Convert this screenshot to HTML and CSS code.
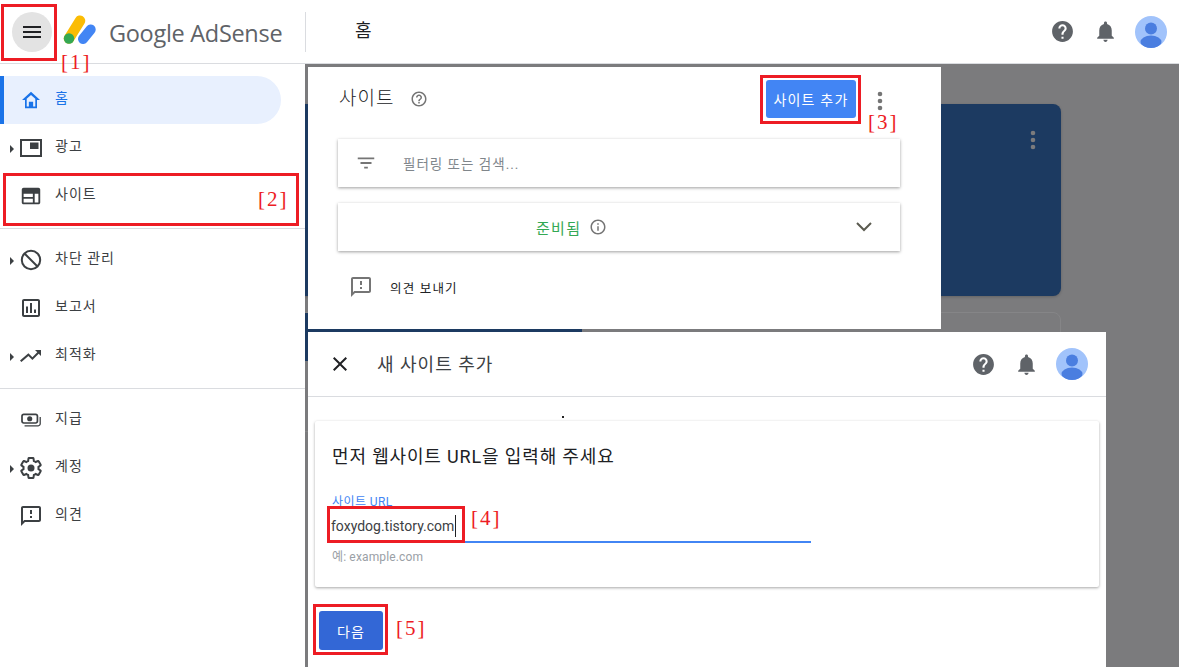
FILE: index.html
```html
<!DOCTYPE html>
<html lang="ko">
<head>
    <meta charset="UTF-8">
    <meta name="viewport" content="width=device-width, initial-scale=1.0">
    <title>Google AdSense</title>
    <link rel="stylesheet" href="styles.css">
</head>
<body>
    <!-- shared icons -->
    <svg class="sprite" aria-hidden="true">
        <symbol id="i-help" viewBox="0 0 24 24"><path d="M12 2C6.48 2 2 6.48 2 12s4.48 10 10 10 10-4.48 10-10S17.52 2 12 2zm1 17h-2v-2h2v2zm2.07-7.75l-.9.92C13.45 12.9 13 13.5 13 15h-2v-.5c0-1.1.45-2.1 1.17-2.83l1.24-1.26c.37-.36.59-.86.59-1.41 0-1.1-.9-2-2-2s-2 .9-2 2H8c0-2.21 1.79-4 4-4s4 1.79 4 4c0 .88-.36 1.68-.93 2.25z"/></symbol>
        <symbol id="i-help-line" viewBox="0 0 24 24"><path d="M11 18h2v-2h-2v2zm1-16C6.48 2 2 6.48 2 12s4.48 10 10 10 10-4.48 10-10S17.52 2 12 2zm0 18c-4.41 0-8-3.59-8-8s3.59-8 8-8 8 3.59 8 8-3.59 8-8 8zm0-14c-2.21 0-4 1.79-4 4h2c0-1.1.9-2 2-2s2 .9 2 2c0 2-3 1.75-3 5h2c0-2.25 3-2.5 3-5 0-2.21-1.79-4-4-4z"/></symbol>
        <symbol id="i-info" viewBox="0 0 24 24"><path d="M11 17h2v-6h-2v6zm1-15C6.48 2 2 6.48 2 12s4.48 10 10 10 10-4.48 10-10S17.52 2 12 2zm0 18c-4.41 0-8-3.59-8-8s3.59-8 8-8 8 3.59 8 8-3.59 8-8 8zm-1-11h2V7h-2v2z"/></symbol>
        <symbol id="i-bell" viewBox="0 0 24 24"><path d="M12 22c1.1 0 2-.9 2-2h-4c0 1.1.89 2 2 2zm6-6v-5c0-3.07-1.64-5.64-4.5-6.32V4c0-.83-.67-1.5-1.5-1.5s-1.5.67-1.5 1.5v.68C7.63 5.36 6 7.92 6 11v5l-2 2v1h16v-1l-2-2z"/></symbol>
        <symbol id="i-feedback" viewBox="0 0 24 24"><path d="M20 2H4c-1.1 0-1.99.9-1.99 2L2 22l4-4h14c1.1 0 2-.9 2-2V4c0-1.1-.9-2-2-2zm0 14H5.17L4 17.17V4h16v12zm-9-4h2v2h-2zm0-6h2v4h-2z"/></symbol>
        <symbol id="i-more" viewBox="0 0 24 24"><circle cx="12" cy="5" r="2.3"/><circle cx="12" cy="12" r="2.3"/><circle cx="12" cy="19" r="2.3"/></symbol>
        <symbol id="i-avatar" viewBox="0 0 32 32">
            <clipPath id="avatar-clip"><circle cx="16" cy="16" r="16"/></clipPath>
            <circle cx="16" cy="16" r="16" fill="#a1c3fb"/>
            <circle cx="16" cy="12.5" r="6" fill="#4a7ee0"/>
            <ellipse cx="16" cy="26" rx="10.5" ry="6.5" fill="#4a7ee0" clip-path="url(#avatar-clip)"/>
        </symbol>
    </svg>

    <div class="page">
        <header class="topbar">
            <button class="menu-btn">
                <svg width="18" height="12" viewBox="0 0 18 12"><path d="M0 0h18v2H0zM0 5h18v2H0zM0 10h18v2H0z"/></svg>
            </button>
            <svg class="logo" width="34" height="32" viewBox="0 0 34 32">
                <line x1="6" y1="24.5" x2="17" y2="6.7" stroke="#fbbc04" stroke-width="10.5" stroke-linecap="round"/>
                <line x1="20" y1="25" x2="27.7" y2="15.5" stroke="#4285f4" stroke-width="10" stroke-linecap="round"/>
                <circle cx="6" cy="24.5" r="5.2" fill="#34a853"/>
            </svg>
            <span class="brand">Google AdSense</span>
            <span class="page-title">홈</span>
            <div class="actions">
                <svg class="ic-help"><use href="#i-help"/></svg>
                <svg class="ic-bell"><use href="#i-bell"/></svg>
                <svg class="ic-avatar"><use href="#i-avatar"/></svg>
            </div>
        </header>

        <div class="layout">
            <nav class="sidebar">
                <div class="nav-group">
                    <a class="nav-item active">
                        <svg viewBox="-2 -2 28 28"><path d="M12 2.5L1.5 12H5v9.5h14V12h3.500L12 2.500zM17 19.500h-2.500V14h-5v5.500H7v-8.900l5-4.500 5 4.500v8.900z"/><path d="M10 15h4v5h-4z"/></svg>
                        <span>홈</span>
                    </a>
                    <a class="nav-item has-sub">
                        <svg viewBox="1 1 24 24"><path d="M2 4h22v18H2V4zm2 2v14h18V6H4zm8 1.500h8.500V14H12V7.500z"/></svg>
                        <span>광고</span>
                    </a>
                    <a class="nav-item">
                        <svg viewBox="0 -1 26 26"><path d="M5 3h16c1.100 0 2 .9 2 2v14c0 1.100-.9 2-2 2H5c-1.100 0-2-.9-2-2V5c0-1.100.9-2 2-2zm0 6.500v3.500h10V9.500H5zm12 0V19h4V9.500h-4zM5 15v4h10v-4H5z"/></svg>
                        <span>사이트</span>
                    </a>
                </div>
                <div class="nav-group">
                    <a class="nav-item has-sub">
                        <svg viewBox="0 0 24 24"><circle cx="12" cy="12" r="9.200" fill="none" stroke="currentColor" stroke-width="2"/><path d="M5.500 5.500l13 13" stroke="currentColor" stroke-width="2"/></svg>
                        <span>차단 관리</span>
                    </a>
                    <a class="nav-item">
                        <svg viewBox="0 0 24 24"><path d="M5 3h14c1.100 0 2 .9 2 2v14c0 1.100-.9 2-2 2H5c-1.100 0-2-.9-2-2V5c0-1.100.9-2 2-2zm0 2v14h14V5H5zm2 5.500h2V17H7v-6.500zM11 7h2v10h-2V7zm4 6.500h2V17h-2v-3.500z"/></svg>
                        <span>보고서</span>
                    </a>
                    <a class="nav-item has-sub">
                        <svg viewBox="0 0 24 24"><path d="M16 6l2.290 2.290-4.880 4.880-4-4L1 16.590 2.410 18l7-6 4 4 6.300-6.290L22 12V6z"/></svg>
                        <span>최적화</span>
                    </a>
                </div>
                <div class="nav-group">
                    <a class="nav-item">
                        <svg viewBox="-1.500 -1.500 28 28"><path d="M4 5h14c1.700 0 3 1.300 3 3v6c0 1.700-1.300 3-3 3H4c-1.700 0-3-1.300-3-3V8c0-1.700 1.300-3 3-3zm0 2c-.6 0-1 .4-1 1v6c0 .6.4 1 1 1h14c.6 0 1-.4 1-1V8c0-.6-.4-1-1-1H4zm7 1a3 3 0 1 1 0 6 3 3 0 0 1 0-6zm11.500 1h1.500v8c0 1.700-1.300 3-3 3H5v-1.500h16c.8 0 1.500-.7 1.500-1.500V9z"/></svg>
                        <span>지급</span>
                    </a>
                    <a class="nav-item has-sub">
                        <svg viewBox="0 0 24 24"><path fill="none" stroke="currentColor" stroke-width="2" d="M19.430 12.980c.04-.32.07-.64.07-.98s-.03-.66-.07-.98l2.110-1.650c.19-.15.24-.42.12-.64l-2-3.460c-.12-.22-.39-.3-.61-.22l-2.490 1c-.52-.4-1.080-.73-1.690-.98l-.38-2.650C14.460 2.180 14.250 2 14 2h-4c-.25 0-.46.18-.49.42l-.38 2.650c-.61.25-1.170.59-1.690.98l-2.490-1c-.23-.09-.49 0-.61.22l-2 3.460c-.13.22-.07.49.12.64l2.110 1.650c-.04.32-.07.65-.07.98s.03.66.07.98l-2.110 1.650c-.19.15-.24.42-.12.64l2 3.460c.12.22.39.3.61.22l2.490-1c.52.4 1.080.73 1.690.98l.38 2.650c.03.24.24.42.49.42h4c.25 0 .46-.18.49-.42l.38-2.650c.61-.25 1.170-.59 1.690-.98l2.490 1c.23.09.49 0 .61-.22l2-3.460c.12-.22.07-.49-.12-.64l-2.110-1.650z"/><circle cx="12" cy="12" r="3.500"/></svg>
                        <span>계정</span>
                    </a>
                    <a class="nav-item">
                        <svg><use href="#i-feedback"/></svg>
                        <span>의견</span>
                    </a>
                </div>
            </nav>

            <main class="stage">
                <!-- page behind the dim layer -->
                <div class="bg-card">
                    <svg class="bg-more"><use href="#i-more"/></svg>
                </div>
                <div class="bg-card-next"><div class="bg-hero"></div></div>

                <section class="panel panel-sites">
                    <div class="sites-head">
                        <h2>사이트</h2>
                        <svg class="ic-small"><use href="#i-help-line"/></svg>
                        <div class="spacer"></div>
                        <button class="btn btn-add">사이트 추가</button>
                        <svg class="ic-more"><use href="#i-more"/></svg>
                    </div>
                    <div class="row-card filter-card">
                        <svg class="ic-filter" viewBox="0 0 24 24"><path d="M10 18h4v-2h-4v2zM3 6v2h18V6H3zm3 7h12v-2H6v2z"/></svg>
                        <span>필터링 또는 검색...</span>
                    </div>
                    <div class="row-card status-card">
                        <div class="status">
                            <span>준비됨</span>
                            <svg class="ic-small"><use href="#i-info"/></svg>
                        </div>
                        <svg class="chevron" width="16" height="10" viewBox="0 0 16 10"><path d="M1 1l7 7 7-7" fill="none" stroke="#5b5b50" stroke-width="2"/></svg>
                    </div>
                    <div class="send-feedback">
                        <svg><use href="#i-feedback"/></svg>
                        <span>의견 보내기</span>
                    </div>
                </section>

                <section class="panel panel-new">
                    <div class="new-head">
                        <svg class="ic-close" viewBox="0 0 24 24"><path d="M19 6.410L17.590 5 12 10.590 6.410 5 5 6.410 10.590 12 5 17.590 6.410 19 12 13.410 17.590 19 19 17.590 13.410 12z"/></svg>
                        <h2>새 사이트 추가</h2>
                        <div class="actions">
                            <svg class="ic-help"><use href="#i-help"/></svg>
                            <svg class="ic-bell"><use href="#i-bell"/></svg>
                            <svg class="ic-avatar"><use href="#i-avatar"/></svg>
                        </div>
                    </div>
                    <div class="url-card">
                        <h3>먼저 웹사이트 URL을 입력해 주세요</h3>
                        <div class="field">
                            <label>사이트 URL</label>
                            <div class="field-input"><span class="field-value">foxydog.tistory.com</span></div>
                            <p>예: example.com</p>
                        </div>
                    </div>
                    <button class="btn btn-next">다음</button>
                    <i class="speck"></i>
                </section>
            </main>
        </div>

        <!-- red annotations on top of the screenshot -->
        <div class="mark mark-1"></div>
        <div class="mark mark-2"></div>
        <div class="mark mark-3"></div>
        <div class="mark mark-4"></div>
        <div class="mark mark-5"></div>
        <span class="tag tag-1">[1]</span>
        <span class="tag tag-2">[2]</span>
        <span class="tag tag-3">[3]</span>
        <span class="tag tag-4">[4]</span>
        <span class="tag tag-5">[5]</span>
    </div>
</body>
</html>
```

FILE: styles.css
```css
* {
    box-sizing: border-box;
}
html, body {
    margin: 0;
    height: 100%;
    overflow: hidden;
}
body {
    font-family: Roboto, "Noto Sans CJK KR", sans-serif;
    font-size: 14px;
    color: #3c4043;
    background: #fff;
}
h2, h3, p {
    margin: 0;
    font-weight: 400;
}
button {
    font-family: inherit;
    border: 0;
}
.sprite {
    position: absolute;
    width: 0;
    height: 0;
}
.page {
    position: relative;
    width: 1179px;
    height: 667px;
    display: flex;
    flex-direction: column;
}

/* top bar */
.topbar {
    flex: none;
    height: 64px;
    display: flex;
    align-items: center;
    padding: 0 12px;
    border-bottom: 1px solid #dadce0;
    background: #fff;
}
.menu-btn {
    width: 40px;
    height: 40px;
    border-radius: 50%;
    background: #e3e3e3;
    display: flex;
    align-items: center;
    justify-content: center;
    padding: 0;
    fill: #202124;
}
.logo {
    margin: -3px 0 0 11px;
}
.brand {
    margin-left: 12px;
    width: 196px;
    font-family: "Open Sans", sans-serif;
    font-size: 23.500px;
    letter-spacing: -0.3px;
    color: #5f6368;
    line-height: 40px;
    height: 40px;
    padding-top: 1px;
}
.page-title {
    height: 40px;
    line-height: 38px;
    border-left: 1px solid #dadce0;
    padding-left: 49px;
    font-size: 18px;
    color: #202124;
}
.actions {
    margin-left: auto;
    display: flex;
    align-items: center;
    fill: #5f6368;
}
.ic-help {
    width: 25px;
    height: 25px;
}
.ic-bell {
    width: 25px;
    height: 25px;
    margin-left: 18px;
}
.ic-avatar {
    width: 32px;
    height: 32px;
    margin-left: 17px;
}

/* left menu */
.layout {
    flex: 1;
    display: flex;
    min-height: 0;
}
.sidebar {
    flex: none;
    width: 305px;
    background: #fff;
    padding-top: 12px;
}
.nav-group {
    padding-bottom: 8px;
    margin-bottom: 7px;
    border-bottom: 1px solid #dadce0;
}
.nav-group:last-child {
    border-bottom: 0;
}
.nav-item {
    position: relative;
    height: 48px;
    width: 281px;
    display: flex;
    align-items: center;
    padding-left: 19px;
    fill: #3c4043;
    color: #3c4043;
}
.nav-item svg {
    width: 24px;
    height: 24px;
    flex: none;
}
.nav-item span {
    margin-left: 12px;
    line-height: 20px;
    margin-top: -4px;
    font-size: 14px;
    letter-spacing: 1px;
}
.nav-item.active {
    background: #e8f0fe;
    border-left: 4px solid #1a73e8;
    border-radius: 0 24px 24px 0;
    padding-left: 15px;
    color: #1a73e8;
    fill: #1a73e8;
}
.has-sub::before {
    content: "";
    position: absolute;
    left: 10px;
    top: 21px;
    border-left: 4px solid #3c4043;
    border-top: 4px solid transparent;
    border-bottom: 4px solid transparent;
}

/* dimmed page with the two windows on it */
.stage {
    flex: 1;
    position: relative;
    overflow: hidden;
    background: #7b7b7d;
}
.bg-card {
    position: absolute;
    left: -20px;
    top: 40px;
    width: 776px;
    height: 192px;
    background: #1c3a61;
    border-radius: 8px;
    box-shadow: 0 1px 3px rgba(0, 0, 0, .2);
}
.bg-more {
    position: absolute;
    right: 16px;
    top: 24px;
    width: 24px;
    height: 24px;
    fill: #7b7b7d;
}
.bg-card-next {
    position: absolute;
    left: -20px;
    top: 248px;
    width: 776px;
    height: 120px;
    border: 1px solid #858587;
    border-radius: 8px;
    overflow: hidden;
}
.bg-hero {
    width: 296px;
    height: 48px;
    background: #1c3a61;
}
.panel {
    position: absolute;
    background: #fff;
}
.panel-sites {
    left: 3px;
    top: 3px;
    width: 633px;
    height: 262px;
}
.panel-new {
    left: 3px;
    top: 268px;
    width: 798px;
    height: 335px;
}

/* sites window */
.sites-head {
    display: flex;
    align-items: center;
    height: 38px;
    margin-top: 13px;
    padding: 0 49px 0 31px;
}
.sites-head h2 {
    font-size: 19px;
    font-weight: 300;
    letter-spacing: 1px;
    color: #202124;
    margin-top: -6px;
}
.ic-small {
    width: 18px;
    height: 18px;
    fill: #757575;
}
.sites-head .ic-small {
    margin-left: 16px;
}
.spacer {
    flex: 1;
}
.btn {
    color: #fff;
    font-size: 14px;
    letter-spacing: 1.200px;
    border-radius: 3px;
    padding: 0;
}
.btn-add {
    width: 90px;
    height: 38px;
    background: #4285f4;
}
.ic-more {
    width: 24px;
    height: 24px;
    margin-left: 12px;
    margin-top: 3px;
    fill: #757575;
    flex: none;
}
.row-card {
    display: flex;
    align-items: center;
    width: 562px;
    height: 48px;
    margin-left: 30px;
    background: #fff;
    box-shadow: 0 1px 3px rgba(0, 0, 0, .38);
}
.filter-card {
    margin-top: 21px;
    padding-left: 17px;
    color: #80868b;
}
.ic-filter {
    width: 22px;
    height: 22px;
    fill: #757575;
}
.filter-card span {
    margin-left: 26px;
    font-size: 13.500px;
    letter-spacing: 1px;
}
.status-card {
    margin-top: 16px;
    justify-content: space-between;
    padding: 0 28px 0 198px;
}
.status {
    display: flex;
    align-items: center;
    gap: 8px;
    color: #34a853;
    font-size: 15px;
    letter-spacing: 1.300px;
}
.send-feedback {
    display: flex;
    align-items: center;
    margin: 24px 0 0 41px;
    fill: #757575;
    color: #202124;
    font-size: 12.500px;
    letter-spacing: 1.200px;
}
.send-feedback svg {
    width: 24px;
    height: 24px;
}
.send-feedback span {
    margin-left: 17px;
}

/* new site window */
.new-head {
    display: flex;
    align-items: center;
    height: 65px;
    padding: 0 18px 0 20px;
    border-bottom: 1px solid #dadce0;
    fill: #202124;
}
.ic-close {
    width: 24px;
    height: 24px;
    flex: none;
}
.new-head h2 {
    margin-left: 25px;
    font-size: 18px;
    letter-spacing: 1px;
    color: #3c4043;
    margin-top: -3px;
}
.new-head .actions {
    fill: #5f6368;
}
.speck {
    position: absolute;
    left: 254px;
    top: 84px;
    width: 2px;
    height: 2px;
    background: #222;
}
.url-card {
    height: 166px;
    margin: 24px 7px 0;
    padding: 24px 17px 0;
    background: #fff;
    border-radius: 2px;
    box-shadow: 0 1px 3px rgba(0, 0, 0, .35);
}
.url-card h3 {
    font-size: 18px;
    line-height: 24px;
    letter-spacing: .85px;
    color: #202124;
}
.field {
    margin-top: 26px;
}
.field label {
    display: block;
    font-size: 12px;
    line-height: 14px;
    letter-spacing: .4px;
    color: #4285f4;
}
.field-input {
    width: 480px;
    height: 28px;
    margin: 6px 0 0 -1px;
    border-bottom: 2px solid #4285f4;
}
.field-value {
    display: inline-block;
    font-size: 14px;
    line-height: 22px;
    color: #3c4043;
    padding-right: 1px;
    border-right: 1px solid #202124;
}
.field p {
    margin-top: 6px;
    font-size: 12px;
    line-height: 16px;
    letter-spacing: .15px;
    color: #9aa0a6;
}
.btn-next {
    display: block;
    width: 64px;
    height: 39px;
    margin: 24px 0 0 11px;
    background: #3367d6;
}

/* annotations */
.mark {
    position: absolute;
    border: 3px solid #ed1c24;
}
.mark-1 { left: 1px; top: 4px; width: 56px; height: 57px; }
.mark-2 { left: 3px; top: 173px; width: 296px; height: 53px; }
.mark-3 { left: 760px; top: 75px; width: 101px; height: 49px; }
.mark-4 { left: 327px; top: 506px; width: 138px; height: 37px; }
.mark-5 { left: 313px; top: 604px; width: 75px; height: 51px; }
.tag {
    position: absolute;
    font-family: "Liberation Serif", serif;
    font-size: 21px;
    line-height: 22px;
    letter-spacing: 2px;
    color: #ed1c24;
}
.tag-1 { left: 61px; top: 51px; }
.tag-2 { left: 258px; top: 188px; }
.tag-3 { left: 868px; top: 111px; }
.tag-4 { left: 471px; top: 507px; }
.tag-5 { left: 396px; top: 617px; }
```
